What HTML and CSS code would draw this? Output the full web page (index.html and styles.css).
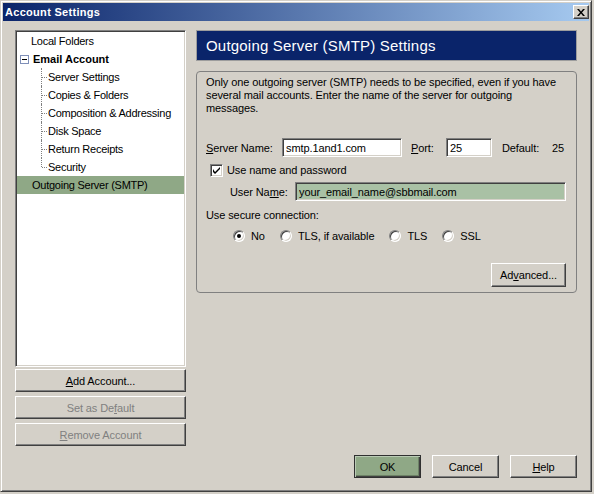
FILE: index.html
```html
<!DOCTYPE html>
<html lang="en">
<head>
    <meta charset="UTF-8">
    <title>Account Settings</title>
    <link rel="stylesheet" href="styles.css">
</head>
<body>
    <div class="window">
        <div class="titlebar">
            <span class="title">Account Settings</span>
            <button class="btn close-btn" aria-label="Close">
                <svg width="8" height="7" viewBox="0 0 8 7">
                    <path d="M0 0h2l2 2.5 2-2.5h2l-3 3.5 3 3.5h-2l-2-2.5-2 2.5h-2l3-3.5z" fill="#000"/>
                </svg>
            </button>
        </div>

        <div class="content">
            <div class="main">
                <div class="sidebar">
                    <ul class="tree">
                        <li class="tree-item root">Local Folders</li>
                        <li class="tree-item account"><span class="toggle"></span>Email Account</li>
                        <li class="tree-item child">Server Settings</li>
                        <li class="tree-item child">Copies &amp; Folders</li>
                        <li class="tree-item child">Composition &amp; Addressing</li>
                        <li class="tree-item child">Disk Space</li>
                        <li class="tree-item child">Return Receipts</li>
                        <li class="tree-item child last">Security</li>
                        <li class="tree-item root selected">Outgoing Server (SMTP)</li>
                    </ul>
                    <div class="side-buttons">
                        <button class="btn"><u>A</u>dd Account...</button>
                        <button class="btn" disabled>Set as De<u>f</u>ault</button>
                        <button class="btn" disabled><u>R</u>emove Account</button>
                    </div>
                </div>

                <div class="panel">
                    <div class="panel-header">Outgoing Server (SMTP) Settings</div>
                    <div class="group">
                        <p class="desc">Only one outgoing server (SMTP) needs to be specified, even if you have several mail accounts. Enter the name of the server for outgoing messages.</p>

                        <div class="form-row server-row">
                            <label class="lbl lbl-server"><u>S</u>erver Name:</label>
                            <input class="field field-server" type="text" value="smtp.1and1.com">
                            <label class="lbl lbl-port"><u>P</u>ort:</label>
                            <input class="field field-port" type="text" value="25">
                            <span class="lbl lbl-default">Default:</span>
                            <span>25</span>
                        </div>

                        <div class="check-row">
                            <span class="checkbox">
                                <svg width="7" height="7" viewBox="0 0 7 7">
                                    <path d="M0 2v3l2 2 5-5v-2l-5 5z" fill="#000"/>
                                </svg>
                            </span>
                            <span class="check-label">Use name and password</span>
                        </div>

                        <div class="form-row user-row">
                            <label class="lbl lbl-user">User Na<u>m</u>e:</label>
                            <input class="field field-user" type="text" value="your_email_name@sbbmail.com">
                        </div>

                        <p class="secure-label">Use secure connection:</p>

                        <div class="radio-row">
                            <span class="radio-item"><span class="radio checked"></span>No</span>
                            <span class="radio-item"><span class="radio"></span>TLS, if available</span>
                            <span class="radio-item"><span class="radio"></span>TLS</span>
                            <span class="radio-item"><span class="radio"></span>SSL</span>
                        </div>

                        <div class="adv-row">
                            <button class="btn btn-adv">Ad<u>v</u>anced...</button>
                        </div>
                    </div>
                </div>
            </div>

            <div class="footer">
                <button class="btn btn-footer btn-default">OK</button>
                <button class="btn btn-footer">Cancel</button>
                <button class="btn btn-footer"><u>H</u>elp</button>
            </div>
        </div>
    </div>
</body>
</html>
```

FILE: styles.css
```css
html, body {
    margin: 0;
    padding: 0;
    background: #d4d0c8;
}

body {
    font-family: "Liberation Sans", Arial, sans-serif;
    font-size: 11px;
    letter-spacing: -0.1px;
    color: #000;
}

.window {
    width: 592px;
    height: 492px;
    box-sizing: border-box;
    border: 1px solid;
    border-color: #d4d0c8 #404040 #404040 #d4d0c8;
    box-shadow: inset 1px 1px #fff, inset -1px -1px #808080;
    padding: 2px;
    display: flex;
    flex-direction: column;
}

/* title bar */
.titlebar {
    height: 18px;
    flex: none;
    background: linear-gradient(to right, #0a246a, #a6caf0);
    display: flex;
    align-items: center;
    justify-content: space-between;
    padding: 0 0 0 2px;
}

.title {
    color: #fff;
    font-weight: bold;
    letter-spacing: 0.3px;
}

.btn {
    box-sizing: border-box;
    font: inherit;
    letter-spacing: inherit;
    color: #000;
    background: #d4d0c8;
    border: 1px solid;
    border-color: #fff #404040 #404040 #fff;
    box-shadow: inset -1px -1px #808080;
    padding: 0;
    margin: 0;
}

.btn:disabled {
    color: #808080;
}

.close-btn {
    width: 16px;
    height: 14px;
    display: flex;
    align-items: center;
    justify-content: center;
}

/* main area */
.content {
    flex: 1;
    display: flex;
    flex-direction: column;
    padding: 9px 12px 11px 12px;
    min-height: 0;
}

.main {
    flex: 1;
    display: flex;
    gap: 10px;
    min-height: 0;
}

.sidebar {
    width: 172px;
    display: flex;
    flex-direction: column;
}

.tree {
    flex: 1;
    list-style: none;
    margin: 0;
    padding: 1px;
    background: #fff;
    border: 1px solid;
    border-color: #808080 #fff #fff #808080;
    box-shadow: inset 1px 1px #404040, inset -1px -1px #d4d0c8;
}

.tree-item {
    height: 18px;
    line-height: 18px;
    position: relative;
    white-space: nowrap;
    letter-spacing: -0.25px;
}

.root {
    padding-left: 14px;
}

.selected {
    padding-left: 15px;
    background: #8fa886;
}

.account {
    display: flex;
    align-items: center;
    padding-left: 3px;
    font-weight: bold;
    letter-spacing: 0;
}

.toggle {
    position: relative;
    width: 7px;
    height: 7px;
    border: 1px solid #7f8fb8;
    background: #fff;
    margin-right: 4px;
}

.toggle::after {
    content: "";
    position: absolute;
    left: 1px;
    top: 3px;
    width: 5px;
    height: 1px;
    background: #000;
}

.child {
    padding-left: 31px;
}

.child::before {
    content: "";
    position: absolute;
    left: 24px;
    top: 0;
    bottom: 0;
    border-left: 1px dotted #808080;
}

.child.last::before {
    bottom: 9px;
}

.child::after {
    content: "";
    position: absolute;
    left: 25px;
    top: 9px;
    width: 5px;
    border-top: 1px dotted #808080;
}

.side-buttons {
    display: flex;
    flex-direction: column;
    gap: 4px;
    margin-top: 2px;
}

.side-buttons .btn {
    height: 23px;
}

/* right panel */
.panel {
    flex: 1;
    display: flex;
    flex-direction: column;
}

.panel-header {
    height: 31px;
    box-sizing: border-box;
    background: #0a246a;
    color: #fff;
    border: 1px solid #9d9d9d;
    font-size: 15px;
    letter-spacing: 0.2px;
    padding-left: 9px;
    display: flex;
    align-items: center;
}

.group {
    margin-top: 10px;
    border: 1px solid #808080;
    border-radius: 4px;
    padding: 4px 10px 5px 9px;
}

.desc {
    margin: 0;
    max-width: 354px;
    line-height: 13px;
}

.form-row {
    display: flex;
    align-items: center;
    height: 19px;
}

.server-row {
    margin-top: 23px;
}

.lbl-server {
    width: 76px;
}

.lbl-port {
    width: 35px;
    margin-left: 9px;
}

.lbl-default {
    width: 50px;
    margin-left: 10px;
}

.field {
    box-sizing: border-box;
    height: 19px;
    font: inherit;
    letter-spacing: inherit;
    color: #000;
    background: #fff;
    border: 1px solid;
    border-color: #808080 #fff #fff #808080;
    box-shadow: inset 1px 1px #404040, inset -1px -1px #d4d0c8;
    padding: 0 0 0 3px;
    margin: 0;
    outline: none;
}

.field-server {
    width: 120px;
}

.field-port {
    width: 46px;
}

.check-row {
    display: flex;
    align-items: center;
    height: 18px;
    margin-top: 4px;
    padding-left: 4px;
}

.checkbox {
    box-sizing: border-box;
    width: 13px;
    height: 13px;
    background: #fff;
    border: 1px solid;
    border-color: #808080 #fff #fff #808080;
    box-shadow: inset 1px 1px #404040, inset -1px -1px #d4d0c8;
    display: flex;
    align-items: center;
    justify-content: center;
}

.check-label {
    margin-left: 4px;
}

.user-row {
    margin-top: 3px;
    padding-left: 24px;
}

.lbl-user {
    width: 65px;
}

.field-user {
    width: 271px;
    background: #a9c1a5;
}

.secure-label {
    margin: 8px 0 0;
    line-height: 13px;
}

.radio-row {
    display: flex;
    align-items: center;
    gap: 15px;
    height: 14px;
    margin-top: 7px;
    padding-left: 27px;
}

.radio-item {
    display: flex;
    align-items: center;
}

.radio {
    position: relative;
    box-sizing: border-box;
    width: 12px;
    height: 12px;
    border-radius: 50%;
    background: #fff;
    border: 1px solid;
    border-color: #808080 #fff #fff #808080;
    box-shadow: inset 1px 1px #404040, inset -1px -1px #d4d0c8;
    margin-right: 6px;
}

.radio.checked::after {
    content: "";
    position: absolute;
    left: 3px;
    top: 3px;
    width: 4px;
    height: 4px;
    border-radius: 50%;
    background: #000;
}

.adv-row {
    display: flex;
    justify-content: flex-end;
    margin-top: 20px;
}

.btn-adv {
    width: 75px;
    height: 24px;
}

/* dialog buttons */
.footer {
    display: flex;
    justify-content: flex-end;
    gap: 11px;
    margin-top: 9px;
}

.btn-footer {
    width: 67px;
    height: 23px;
}

.btn-default {
    background: #8fa886;
    border-color: #303030;
    box-shadow: inset 1px 1px #b9cab4, inset -1px -1px #404040, inset -2px -2px #6d8266;
}
```
